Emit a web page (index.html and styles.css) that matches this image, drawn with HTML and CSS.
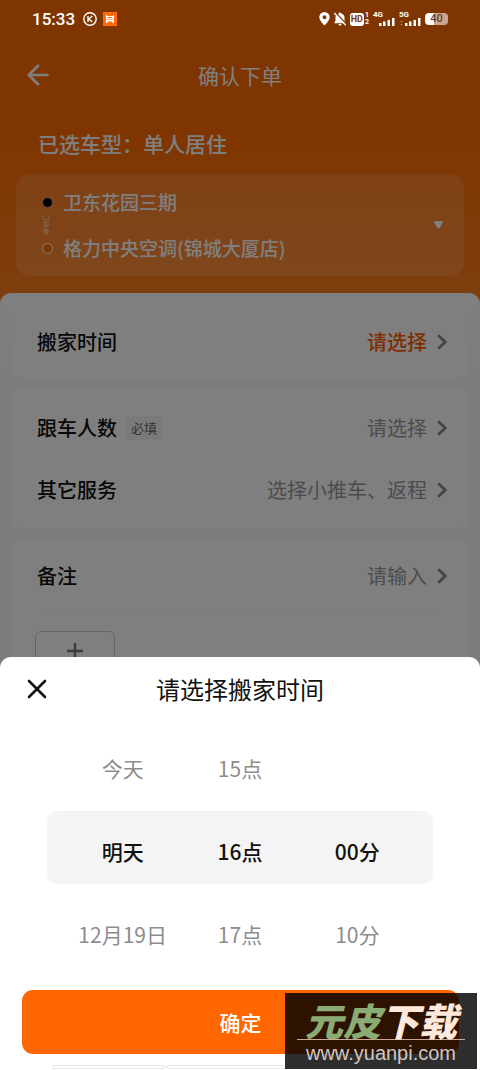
FILE: index.html
```html
<!DOCTYPE html>
<html lang="zh-CN">
<head>
<meta charset="utf-8">
<meta name="viewport" content="width=device-width, initial-scale=1">
<title>确认下单</title>
<link rel="stylesheet" href="styles.css">
</head>
<body>
<div class="screen">
  <div class="status">
    <div class="status-group">
      <span class="clock">15:33</span>
      <svg class="status-k" width="14" height="14" viewBox="0 0 14 14" fill="none" stroke="#fff" stroke-width="1.4"><circle cx="7" cy="7" r="6.2"/><path d="M5 4v6M9.3 4 5.8 7l3.5 3"/></svg>
      <svg width="14" height="14" viewBox="0 0 14 14"><path fill="#ff6a0a" d="M0 0h14v14H0z"/><path fill="#fff" d="M3 3h1v1h6V3h1v4H3zM3 7.500h8V11H9.500V9.500h-5V11H3z"/><path fill="#ff6a0a" d="M4.500 5h5v1h-5z"/></svg>
    </div>
    <div class="status-group status-right">
      <svg width="11" height="14" viewBox="0 0 11 14"><path fill="#fff" fill-rule="evenodd" d="M5.500 0A5.200 5.200 0 0 0 .3 5.200C.3 8.500 5.500 13.500 5.500 13.500S10.700 8.500 10.700 5.200A5.200 5.200 0 0 0 5.500 0zm0 3.300a2 2 0 1 1 0 4 2 2 0 0 1 0-4z"/></svg>
      <svg width="12" height="14" viewBox="0 0 12 14"><path fill="#fff" d="M6 .5c.7 0 1 .5 1 1 2.300.6 3.500 2 3.500 4v3l1 2v.7H.5v-.7l1-2v-3c0-2 1-3.400 3.500-4 0-.5.3-1 1-1zM4.500 12h3c0 2-3 2-3 0z"/><path stroke="#7f3500" stroke-width="1.500" d="m1.500.5 11 12"/><path stroke="#fff" stroke-width="1.400" d="m.3 1 11.500 12.300"/></svg>
      <span class="hd"><b>HD</b><small><i>1</i><i>2</i></small></span>
      <span class="signal"><b>4G</b><svg width="22" height="14" viewBox="0 0 22 14" fill="#fff"><path d="M6 11h2.500v3H6zM10 9.500h2.500V14H10zM14.500 8H17v6h-2.500zM19 6h2.500v8H19z"/></svg></span>
      <span class="signal"><b>5G</b><svg width="22" height="14" viewBox="0 0 22 14" fill="#fff"><path d="M6 11h2.500v3H6zM10 9.500h2.500V14H10zM14.500 8H17v6h-2.500zM19 6h2.500v8H19z"/><path opacity=".35" d="M1 9h3l-1.500 1.500zM1 12h3l-1.500 1.500z"/></svg></span>
      <span class="battery">40</span>
    </div>
  </div>

  <main class="page">
    <header class="nav">
      <button class="icon-btn" aria-label="返回"><svg width="22" height="22" viewBox="0 0 22 22" fill="none" stroke="#fff" stroke-width="2.700" stroke-linecap="round" stroke-linejoin="round"><path d="M20.500 11H2M11 1.800 1.800 11l9.200 9.200"/></svg></button>
      <h1 class="nav-title">确认下单</h1>
    </header>
    <p class="car-type">已选车型：单人居住</p>
    <section class="route">
      <ul class="stops">
        <li class="stop stop-from">卫东花园三期</li>
        <li class="stop-gap"><svg width="8" height="20" viewBox="0 0 8 20" fill="none" stroke="#fff" stroke-opacity=".45" stroke-width="1.300"><path d="M1.500 1v3l2.500 1.500L6.500 4V1M1 7.500h6M1 9l3 3 3-3M4 7v4M1 14.500h6M1.500 16.500h5L4 19zM4 14v4"/></svg></li>
        <li class="stop stop-to">格力中央空调(锦城大厦店)</li>
      </ul>
      <svg width="9" height="8" viewBox="0 0 9 8"><path fill="#fff" d="M1 0h7q1 .2.800 1.500L5.500 7.300q-1 .9-2 0L.2 1.500Q0 .2 1 0z"/></svg>
    </section>

    <div class="form">
      <section class="card">
        <button class="row row-tall"><span class="label">搬家时间</span><span class="value value-hot">请选择</span><svg class="chev" viewBox="0 0 10 16"><path d="m1.200 1.200 7 6.800-7 6.800"/></svg></button>
      </section>
      <section class="card card-list">
        <button class="row"><span class="label">跟车人数</span><span class="tag">必填</span><span class="value">请选择</span><svg class="chev" viewBox="0 0 10 16"><path d="m1.200 1.200 7 6.800-7 6.800"/></svg></button>
        <button class="row"><span class="label">其它服务</span><span class="value">选择小推车、返程</span><svg class="chev" viewBox="0 0 10 16"><path d="m1.200 1.200 7 6.800-7 6.800"/></svg></button>
      </section>
      <section class="card">
        <button class="row row-tall row-line"><span class="label">备注</span><span class="value">请输入</span><svg class="chev" viewBox="0 0 10 16"><path d="m1.200 1.200 7 6.800-7 6.800"/></svg></button>
        <button class="add" aria-label="添加图片"><svg width="16" height="16" viewBox="0 0 16 16" stroke="#777" stroke-width="2.400"><path d="M8 0v16M0 8h16"/></svg></button>
      </section>
    </div>
  </main>

  <div class="scrim"></div>

  <section class="sheet" role="dialog" aria-labelledby="sheet-title">
    <header class="sheet-head">
      <button class="icon-btn" aria-label="关闭"><svg width="20" height="20" viewBox="0 0 20 20" stroke="#111" stroke-width="2.600" stroke-linecap="round"><path d="m2 2 16 16M18 2 2 18"/></svg></button>
      <h2 class="sheet-title" id="sheet-title">请选择搬家时间</h2>
    </header>
    <div class="picker">
      <ul class="wheel" role="listbox" aria-label="日期">
        <li role="option">今天</li><li role="option" aria-selected="true" class="picked">明天</li><li role="option">12月19日</li>
      </ul>
      <ul class="wheel" role="listbox" aria-label="小时">
        <li role="option">15点</li><li role="option" aria-selected="true" class="picked">16点</li><li role="option">17点</li>
      </ul>
      <ul class="wheel wheel-end" role="listbox" aria-label="分钟">
        <li role="option" aria-selected="true" class="picked">00分</li><li role="option">10分</li>
      </ul>
    </div>
    <button class="confirm">确定</button>
    <div class="peek"><span></span><span></span></div>
  </section>

  <aside class="mark">
    <p class="mark-name"><span>元皮</span>下载</p>
    <p class="mark-url">www.yuanpi.com</p>
  </aside>
</div>
</body>
</html>
```
FILE: styles.css
```css
* { box-sizing: border-box; margin: 0; padding: 0; }
body { font-family: "Noto Sans CJK SC", "Noto Sans", sans-serif; color: #111; }
ul { list-style: none; }
i { font-style: normal; }
svg { display: block; flex: none; }
button { font: inherit; color: inherit; background: none; border: 0; cursor: pointer; }

.screen { position: relative; height: 100vh; overflow: hidden; background: #fff; }

/* Status bar */
.status {
  position: absolute; z-index: 2; top: 0; left: 0; right: 0;
  display: flex; align-items: center; justify-content: space-between;
  height: 38px; padding: 0 32px; color: #fff;
  font-family: Roboto, "Noto Sans", sans-serif;
}
.status-group { display: flex; align-items: center; gap: 6px; }
.clock { font-size: 17px; font-weight: 500; line-height: 20px; }
.status-k { margin-left: 2px; }
.status-right { gap: 4px; }
.hd { display: flex; align-items: center; gap: 1px; }
.hd b { padding: 0 1px; border-radius: 3px; background: #fff; color: #7f3500; font-size: 9px; line-height: 13px; }
.hd small { display: flex; flex-direction: column; font-size: 7px; font-weight: 700; line-height: 7px; }
.signal { position: relative; }
.signal b { position: absolute; top: 0; left: 0; font-size: 8px; line-height: 6px; }
.battery {
  width: 23px; border-radius: 4px; color: #5a4234; text-align: center;
  font-size: 11px; font-weight: 500; line-height: 12px;
  background: linear-gradient(90deg, #fff 40%, #cba78f 40%);
}

/* Order page */
.page {
  display: flex; flex-direction: column; height: 100%; padding-top: 38px; overflow: hidden;
  background: linear-gradient(#ff6a00 120px, #ff7e20 300px);
}
.nav { position: relative; display: flex; flex: none; align-items: center; justify-content: center; height: 74px; color: #fff; }
.icon-btn { position: absolute; left: 27px; }
.nav-title { font-size: 21px; font-weight: 400; line-height: 30px; }
.car-type { flex: none; padding: 15px 38px 15px; color: #fff; font-size: 21px; font-weight: 500; line-height: 32px; }
.route {
  display: flex; flex: none; align-items: center; justify-content: space-between;
  margin: 0 16px 17px; padding: 15px 21px 15px 26px; border-radius: 14px;
  background: rgba(255, 255, 255, .13);
}
.stops { color: #fff; font-size: 19px; font-weight: 500; line-height: 26px; }
.stop { display: flex; align-items: center; gap: 10px; }
.stop::before { content: ""; width: 9px; height: 9px; border: 1px solid #d99a6a; border-radius: 50%; background: #000; }
.stop-to::before { border-color: #fff; background: #ff6a00; }
.stop-gap { height: 20px; }

.form {
  display: flex; flex: 1; flex-direction: column; gap: 11px; min-height: 0;
  padding: 12px 11px 0; border-radius: 11px 11px 0 0;
  background: linear-gradient(#fff, #f9f9f9 80px);
}
.card { flex: none; border-radius: 12px; background: #fff; }
.card-list { padding: 8px 0 7px; }
.row { display: flex; align-items: center; width: 100%; height: 62px; padding: 0 22px 0 26px; font-size: 20px; line-height: 28px; }
.row-tall { height: 73px; }
.label { font-weight: 500; }
.tag { margin-left: 8px; padding: 0 6px; border-radius: 4px; background: #f5f5f5; color: #666; font-size: 13px; line-height: 24px; }
.value { margin-left: auto; color: #999; }
.value-hot { color: #ff5a00; font-weight: 500; }
.chev { width: 10px; height: 16px; margin-left: 10px; fill: none; stroke: #888; stroke-width: 2.8; }
.row-line { background: linear-gradient(#f8f8f8, #f8f8f8) 27px 100% / calc(100% - 54px) 1px no-repeat; }
.add { display: flex; justify-content: center; width: 80px; height: 80px; margin: 19px 24px 24px; padding-top: 11px; border: 1px solid #ccc; border-radius: 6px; }

.scrim { position: absolute; inset: 0; background: rgba(0, 0, 0, .5); }

/* Time picker sheet */
.sheet { position: absolute; right: 0; bottom: 0; left: 0; border-radius: 11px 11px 0 0; background: #fff; }
.sheet-head { display: flex; align-items: center; justify-content: center; height: 64px; }
.sheet-title { font-size: 24px; font-weight: 400; line-height: 34px; }
.picker { position: relative; display: flex; margin: 6px 47px 0; padding: 0 17px; }
.picker::before { content: ""; position: absolute; top: 84px; right: 0; left: 0; height: 73px; border-radius: 10px; background: #f4f4f4; }
.wheel { position: relative; flex: 1; text-align: center; color: #8c8c8c; font-size: 21px; line-height: 83px; white-space: nowrap; }
.wheel-end { padding-top: 83px; }
.picked { color: #111; font-weight: 500; }
.confirm { display: block; width: calc(100% - 43px); height: 64px; margin: 14px 21px 11px 22px; border-radius: 11px; background: #ff6600; color: #fff; font-size: 21px; font-weight: 500; }
.peek { display: flex; gap: 1px; height: 5px; padding: 0 52px; }
.peek span { flex: 3; height: 4px; border: 1px solid #e8e8e8; border-radius: 2px; }
.peek span:last-child { flex: 7; }

/* Site mark */
.mark {
  position: absolute; right: 3px; bottom: 1px; width: 192px; height: 76px; padding: 8px 12px 0;
  background: rgba(0, 0, 0, .82); text-align: center; white-space: nowrap;
}
.mark-name { color: #ffe8dc; border-bottom: 1px solid #c9a99a; font-size: 38px; font-style: italic; font-weight: 900; line-height: 38px; }
.mark-name span { color: #8aab74; }
.mark-url { padding-top: 2px; color: #d0c8c4; font-family: "Liberation Sans", Arial, sans-serif; font-size: 20px; line-height: 22px; }
```
